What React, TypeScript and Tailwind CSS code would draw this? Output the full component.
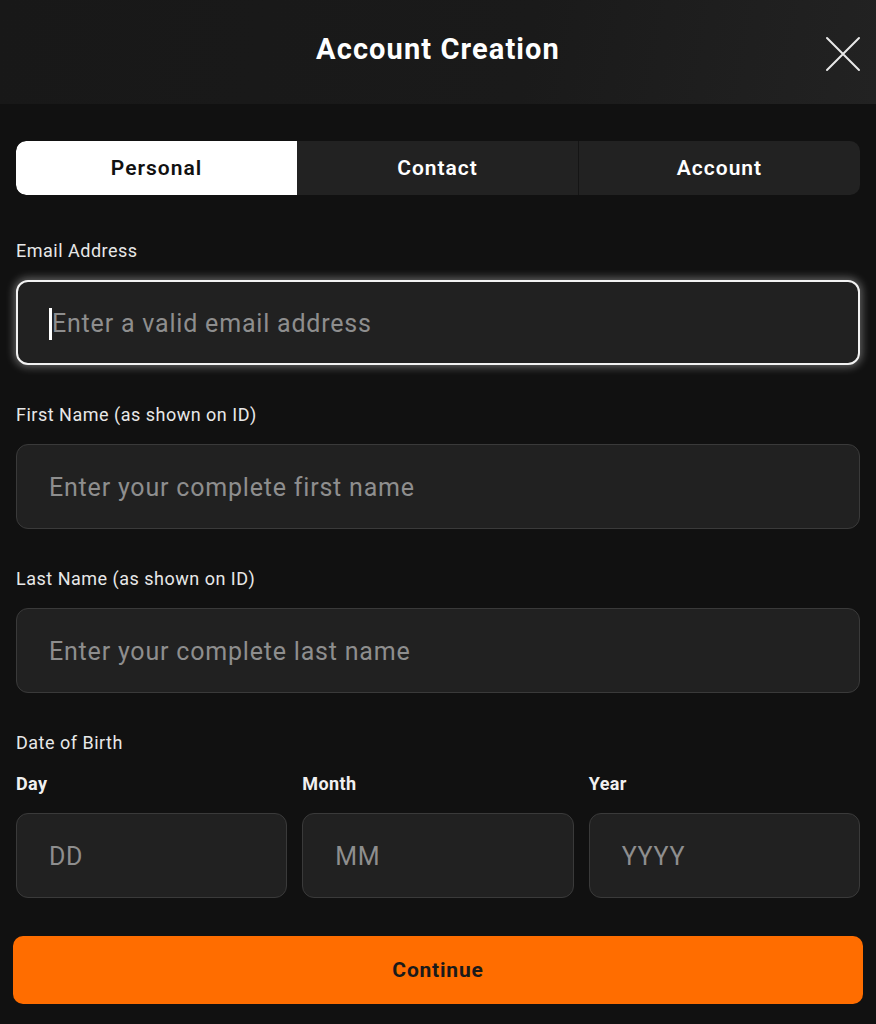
import React from "react";

const font = { fontFamily: "Roboto, 'Noto Sans', Arial, sans-serif" };

function Field({ label, placeholder, focused }: { label: string; placeholder: string; focused?: boolean }) {
  return (
    <div className="flex flex-col">
      <div className="text-[18px] leading-[24px] tracking-[0.5px] text-[#e8e8e8]">{label}</div>
      <div
        className={
          "mt-[17px] h-[85px] rounded-[12px] bg-[#212121] flex items-center pt-[3px] " +
          (focused
            ? "pl-[31px] border-2 border-[#f2f2f2] shadow-[0_0_8px_2px_rgba(255,255,255,0.35)]"
            : "pl-[32px] border-[1.5px] border-[#3a3a3a]")
        }
      >
        {focused && <span className="w-[3px] h-[32px] bg-white" />}
        <span className="text-[25px] tracking-[0.8px] text-[#8e8e8e]">{placeholder}</span>
      </div>
    </div>
  );
}

function DateField({ label, placeholder }: { label: string; placeholder: string }) {
  return (
    <div className="flex flex-col flex-1">
      <div className="text-[18px] leading-[24px] tracking-[0.4px] font-bold text-[#f0f0f0]">{label}</div>
      <div className="mt-[17px] h-[85px] rounded-[12px] bg-[#212121] border-[1.5px] border-[#3a3a3a] flex items-center pt-[3px] pl-[32px]">
        <span className="text-[25px] tracking-[0.7px] text-[#8e8e8e]">{placeholder}</span>
      </div>
    </div>
  );
}

export default function App() {
  return (
    <div style={font} className="w-[876px] h-[1024px] bg-[#111111] overflow-hidden flex flex-col">
      <div className="relative h-[104px] bg-[linear-gradient(100deg,#181818_0%,#1a1a1a_60%,#222222_100%)] flex items-center justify-center">
        <h1 className="text-[29px] font-bold text-white tracking-[1.1px] -mt-[4px]">Account Creation</h1>
        <svg className="absolute left-[825px] top-[36px]" width="36" height="36" viewBox="0 0 36 36">
          <path d="M2 2 L34 34 M34 2 L2 34" stroke="#e8e8e8" strokeWidth="2" strokeLinecap="round" />
        </svg>
      </div>
      <div className="px-[16px] flex flex-col">
        <div className="mt-[37px] h-[54px] rounded-[10px] bg-[#222222] flex overflow-hidden">
          <div className="flex-1 bg-white rounded-l-[10px] flex items-center justify-center pt-[2px] text-[21px] tracking-[1px] font-semibold text-[#111]">
            Personal
          </div>
          <div className="flex-1 flex items-center justify-center pt-[2px] text-[21px] tracking-[1px] font-semibold text-white border-r border-[#151515]">
            Contact
          </div>
          <div className="flex-1 flex items-center justify-center pt-[2px] text-[21px] tracking-[1px] font-semibold text-white">
            Account
          </div>
        </div>
        <div className="mt-[44px]">
          <Field label="Email Address" placeholder="Enter a valid email address" focused />
        </div>
        <div className="mt-[38px]">
          <Field label="First Name (as shown on ID)" placeholder="Enter your complete first name" />
        </div>
        <div className="mt-[38px]">
          <Field label="Last Name (as shown on ID)" placeholder="Enter your complete last name" />
        </div>
        <div className="mt-[38px] text-[18px] leading-[24px] tracking-[0.5px] text-[#e8e8e8]">Date of Birth</div>
        <div className="mt-[17px] flex gap-[15px]">
          <DateField label="Day" placeholder="DD" />
          <DateField label="Month" placeholder="MM" />
          <DateField label="Year" placeholder="YYYY" />
        </div>
        <button className="mt-[38px] -mx-[3px] h-[68px] rounded-[10px] bg-[#ff6d00] pt-[2px] text-[21px] tracking-[0.8px] font-bold text-[#1a1a1a]">
          Continue
        </button>
      </div>
    </div>
  );
}
